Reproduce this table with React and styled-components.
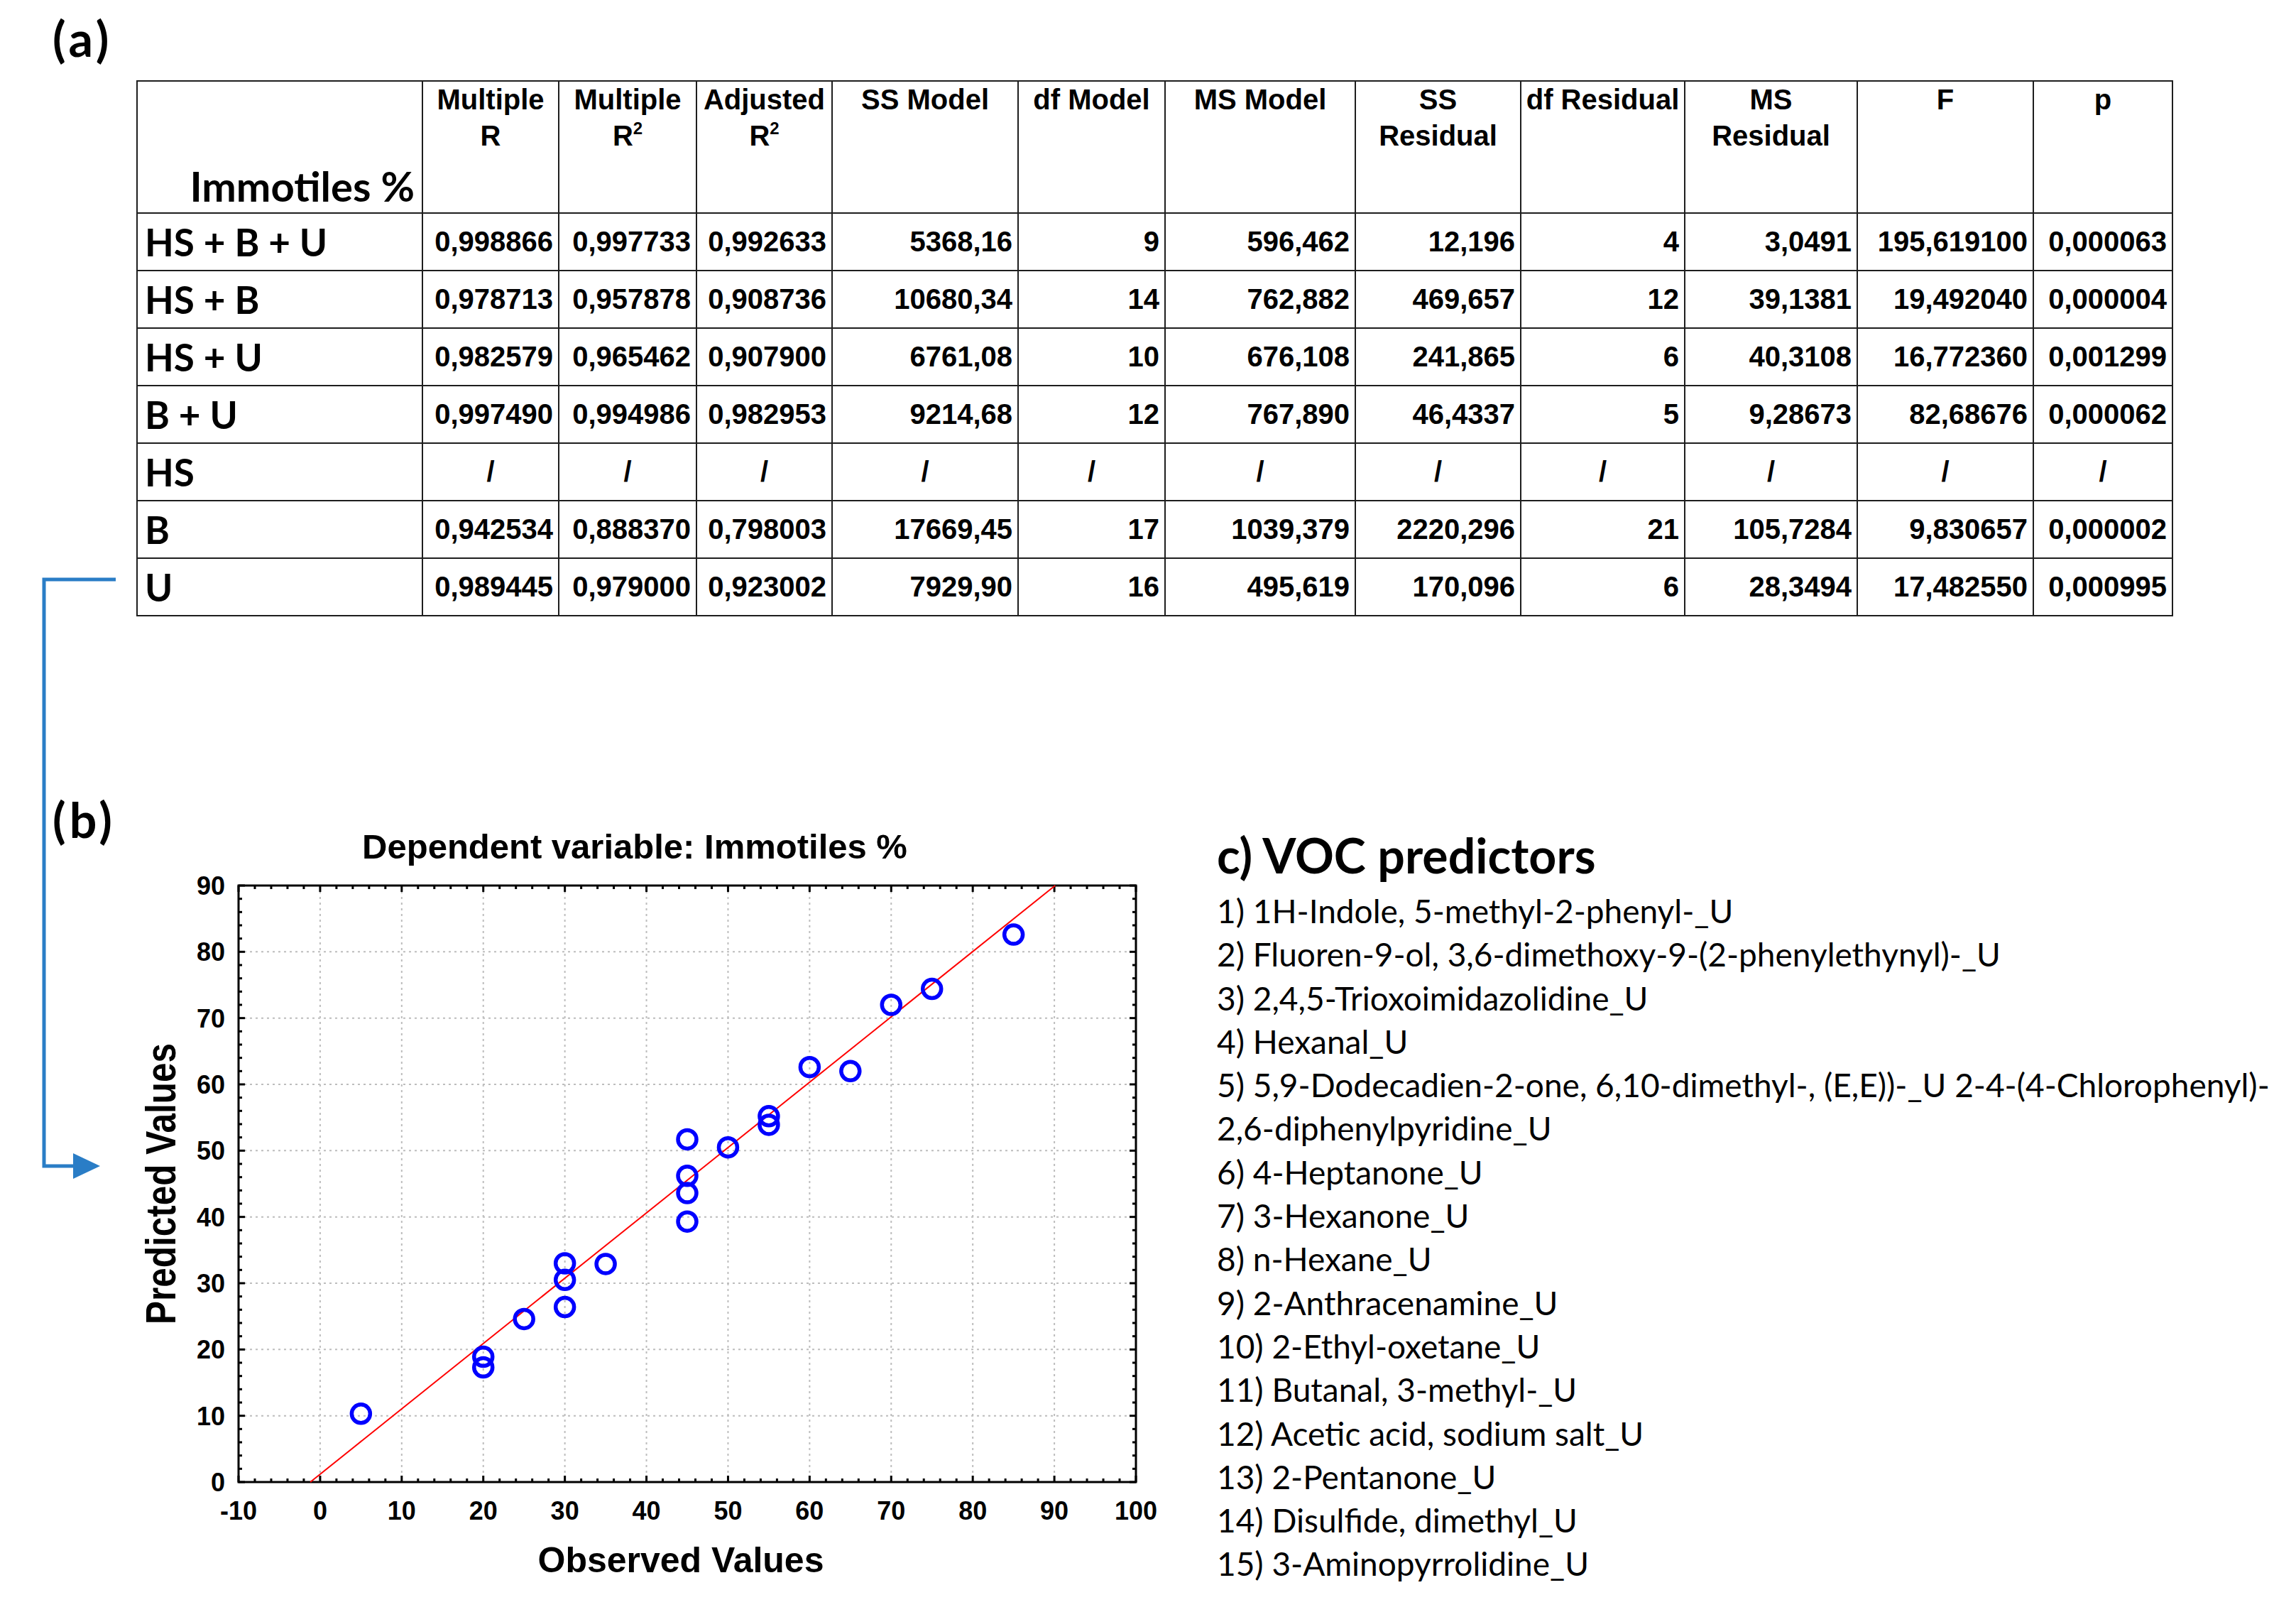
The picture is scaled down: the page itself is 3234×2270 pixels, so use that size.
import React from 'react';
import styled, { createGlobalStyle } from 'styled-components';

const GlobalStyle = createGlobalStyle`
  html, body {
    margin: 0;
    padding: 0;
    background: #ffffff;
  }
  body {
    font-family: "Liberation Sans", Arial, sans-serif;
    color: #000000;
  }
`;

const Page = styled.div`
  position: relative;
  width: 3234px;
  height: 2270px;
  overflow: hidden;
  background: #ffffff;
`;

const TopSection = styled.section`
  padding: 14px 0 0 74px;
`;

const PanelLabel = styled.div`
  font-family: Lato, "Noto Sans", sans-serif;
  font-weight: 700;
  font-size: 68px;
  letter-spacing: 5px;
  line-height: 80px;
  width: ${props => props.$width || 'auto'};
  flex: none;
`;

const StatsTable = styled.table`
  margin: 19px 0 0 118px;
  border-collapse: collapse;
  table-layout: fixed;
  width: 2867px;
  font-family: "Liberation Sans", Arial, sans-serif;
  font-weight: 700;
  font-size: 40px;
`;

const Col = styled.col`
  width: ${props => props.$w}px;
`;

const HeadRow = styled.tr`
  height: 186px;
`;

const BodyRow = styled.tr`
  height: 81px;
`;

const HeadCell = styled.th`
  border: 2px solid #1e1e1e;
  vertical-align: top;
  text-align: center;
  font-weight: 700;
  line-height: 51px;
  padding: 0;
  white-space: nowrap;
`;

const CornerCell = styled(HeadCell)`
  vertical-align: bottom;
  text-align: right;
  font-family: Lato, "Noto Sans", sans-serif;
  font-size: 58px;
  line-height: 66px;
  padding: 0 10px 4px 0;
`;

const RowLabel = styled.td`
  border: 2px solid #1e1e1e;
  font-family: Lato, "Noto Sans", sans-serif;
  font-size: 53px;
  font-weight: 700;
  padding: 0 0 0 10px;
  white-space: nowrap;
`;

const ValueCell = styled.td`
  border: 2px solid #1e1e1e;
  text-align: ${props => (props.$empty ? 'center' : 'right')};
  padding: 0 7px 0 0;
  padding-left: ${props => (props.$empty ? '7px' : '0')};
  white-space: nowrap;
`;

const Sup = styled.sup`
  font-size: 24px;
  line-height: 0;
  vertical-align: 16px;
`;

const BottomSection = styled.section`
  display: flex;
  align-items: flex-start;
  margin-top: 246px;
  padding-left: 74px;
`;

const ChartSvg = styled.svg`
  display: block;
  flex: none;
  width: 1500px;
  height: 1156px;
  font-family: "Liberation Sans", Arial, sans-serif;
  font-weight: 700;
`;

const Predictors = styled.div`
  margin-left: 34px;
  font-family: Lato, "Noto Sans", sans-serif;
  color: #000000;
`;

const PredictorsTitle = styled.h2`
  margin: 50px 0 0;
  font-size: 68px;
  font-weight: 700;
  line-height: 80px;
`;

const PredictorList = styled.div`
  margin-top: 8px;
  font-size: 46px;
  font-weight: 400;
  line-height: 61.3px;
`;

const PredictorLine = styled.div`
  white-space: nowrap;
`;

const Connector = styled.svg`
  position: absolute;
  left: 0;
  top: 0;
  width: 200px;
  height: 1700px;
  pointer-events: none;
`;

const columns = [402, 192, 194, 191, 262, 207, 268, 233, 231, 243, 248, 196];

const headers = [
  ['Multiple', 'R'],
  ['Multiple', 'R2'],
  ['Adjusted', 'R2'],
  ['SS Model'],
  ['df Model'],
  ['MS Model'],
  ['SS', 'Residual'],
  ['df Residual'],
  ['MS', 'Residual'],
  ['F'],
  ['p'],
];

const rows = [
  ['HS + B + U', ['0,998866', '0,997733', '0,992633', '5368,16', '9', '596,462', '12,196', '4', '3,0491', '195,619100', '0,000063']],
  ['HS + B', ['0,978713', '0,957878', '0,908736', '10680,34', '14', '762,882', '469,657', '12', '39,1381', '19,492040', '0,000004']],
  ['HS + U', ['0,982579', '0,965462', '0,907900', '6761,08', '10', '676,108', '241,865', '6', '40,3108', '16,772360', '0,001299']],
  ['B + U', ['0,997490', '0,994986', '0,982953', '9214,68', '12', '767,890', '46,4337', '5', '9,28673', '82,68676', '0,000062']],
  ['HS', ['/', '/', '/', '/', '/', '/', '/', '/', '/', '/', '/']],
  ['B', ['0,942534', '0,888370', '0,798003', '17669,45', '17', '1039,379', '2220,296', '21', '105,7284', '9,830657', '0,000002']],
  ['U', ['0,989445', '0,979000', '0,923002', '7929,90', '16', '495,619', '170,096', '6', '28,3494', '17,482550', '0,000995']],
];

const points = [
  [5, 10.3], [20, 18.9], [20, 17.3], [25, 24.6], [30, 33.0], [30, 30.5], [30, 26.4],
  [35, 32.9], [45, 51.7], [45, 46.2], [45, 43.6], [45, 39.3], [50, 50.5], [55, 55.2],
  [55, 53.9], [60, 62.6], [65, 62.0], [70, 72.0], [75, 74.4], [85, 82.6],
];

const predictors = [
  ['1) 1H-Indole, 5-methyl-2-phenyl-_U'],
  ['2) Fluoren-9-ol, 3,6-dimethoxy-9-(2-phenylethynyl)-_U'],
  ['3) 2,4,5-Trioxoimidazolidine_U'],
  ['4) Hexanal_U'],
  ['5) 5,9-Dodecadien-2-one, 6,10-dimethyl-, (E,E))-_U 2-4-(4-Chlorophenyl)-', '2,6-diphenylpyridine_U'],
  ['6) 4-Heptanone_U'],
  ['7) 3-Hexanone_U'],
  ['8) n-Hexane_U'],
  ['9) 2-Anthracenamine_U'],
  ['10) 2-Ethyl-oxetane_U'],
  ['11) Butanal, 3-methyl-_U'],
  ['12) Acetic acid, sodium salt_U'],
  ['13) 2-Pentanone_U'],
  ['14) Disulfide, dimethyl_U'],
  ['15) 3-Aminopyrrolidine_U'],
];

// plot frame inside the chart svg
const left = 156;
const right = 1420;
const top = 133;
const bottom = 973;
const sx = v => left + ((v + 10) * (right - left)) / 110;
const sy = v => bottom - (v * (bottom - top)) / 90;

const range = (from, to, step) => {
  const out = [];
  for (let v = from; v <= to + 0.001; v += step) out.push(v);
  return out;
};

function HeaderText({ lines }) {
  return lines.map((line, i) => (
    <React.Fragment key={i}>
      {i > 0 && <br />}
      {line === 'R2' ? (
        <>
          R<Sup>2</Sup>
        </>
      ) : (
        line
      )}
    </React.Fragment>
  ));
}

function RegressionTable() {
  return (
    <StatsTable>
      <colgroup>
        {columns.map((w, i) => (
          <Col key={i} $w={w} />
        ))}
      </colgroup>
      <thead>
        <HeadRow>
          <CornerCell>Immotiles %</CornerCell>
          {headers.map((h, i) => (
            <HeadCell key={i}>
              <HeaderText lines={h} />
            </HeadCell>
          ))}
        </HeadRow>
      </thead>
      <tbody>
        {rows.map(([label, values]) => (
          <BodyRow key={label}>
            <RowLabel>{label}</RowLabel>
            {values.map((v, i) => (
              <ValueCell key={i} $empty={v === '/'}>
                {v}
              </ValueCell>
            ))}
          </BodyRow>
        ))}
      </tbody>
    </StatsTable>
  );
}

function ScatterChart() {
  const xTicks = range(-10, 100, 2);
  const yTicks = range(0, 90, 2);
  return (
    <ChartSvg viewBox="0 0 1500 1156">
      <text x="714" y="95" fontSize="49" textAnchor="middle">
        Dependent variable: Immotiles %
      </text>

      {range(0, 90, 10).map(v => (
        <line key={'gx' + v} x1={sx(v)} x2={sx(v)} y1={top} y2={bottom} stroke="#bdbdbd" strokeWidth="2" strokeDasharray="3 5" />
      ))}
      {range(10, 80, 10).map(v => (
        <line key={'gy' + v} x1={left} x2={right} y1={sy(v)} y2={sy(v)} stroke="#bdbdbd" strokeWidth="2" strokeDasharray="3 5" />
      ))}

      {xTicks.map(v => {
        const len = Math.round(v) % 10 === 0 ? 9 : 5;
        return (
          <g key={'tx' + v} stroke="#000" strokeWidth="3">
            <line x1={sx(v)} x2={sx(v)} y1={bottom} y2={bottom - len} />
            <line x1={sx(v)} x2={sx(v)} y1={top} y2={top + len} />
          </g>
        );
      })}
      {yTicks.map(v => {
        const len = Math.round(v) % 10 === 0 ? 9 : 5;
        return (
          <g key={'ty' + v} stroke="#000" strokeWidth="3">
            <line x1={left} x2={left + len} y1={sy(v)} y2={sy(v)} />
            <line x1={right} x2={right - len} y1={sy(v)} y2={sy(v)} />
          </g>
        );
      })}

      <rect x={left} y={top} width={right - left} height={bottom - top} fill="none" stroke="#000" strokeWidth="3" />

      <line x1={sx(-1.2)} y1={sy(0)} x2={sx(90.1)} y2={sy(90)} stroke="#ff0000" strokeWidth="2" />

      {points.map(([ox, py], i) => (
        <circle key={i} cx={sx(ox)} cy={sy(py)} r="13" fill="none" stroke="#0000ff" strokeWidth="5.5" />
      ))}

      {range(-10, 100, 10).map(v => (
        <text key={'lx' + v} x={sx(v)} y="1026" fontSize="36" textAnchor="middle">
          {Math.round(v)}
        </text>
      ))}
      {range(0, 90, 10).map(v => (
        <text key={'ly' + v} x="137" y={sy(v) + 13} fontSize="36" textAnchor="end">
          {Math.round(v)}
        </text>
      ))}

      <text x="779" y="1100" fontSize="50" textAnchor="middle">
        Observed Values
      </text>
      <text
        transform="translate(67 553) rotate(-90)"
        fontSize="60"
        textAnchor="middle"
        textLength="396"
        lengthAdjust="spacingAndGlyphs"
      >
        Predicted Values
      </text>
    </ChartSvg>
  );
}

function PredictorPanel() {
  return (
    <Predictors>
      <PredictorsTitle>c) VOC predictors</PredictorsTitle>
      <PredictorList>
        {predictors.map(lines =>
          lines.map((line, i) => <PredictorLine key={line + i}>{line}</PredictorLine>)
        )}
      </PredictorList>
    </Predictors>
  );
}

export default function App() {
  return (
    <Page>
      <GlobalStyle />
      <TopSection>
        <PanelLabel>(a)</PanelLabel>
        <RegressionTable />
      </TopSection>
      <BottomSection>
        <PanelLabel $width="106px">(b)</PanelLabel>
        <ScatterChart />
        <PredictorPanel />
      </BottomSection>
      <Connector viewBox="0 0 200 1700">
        <polyline points="163,816 62,816 62,1642 108,1642" fill="none" stroke="#2a7dc6" strokeWidth="5" />
        <polygon points="103,1624 141,1642 103,1660" fill="#2a7dc6" />
      </Connector>
    </Page>
  );
}
